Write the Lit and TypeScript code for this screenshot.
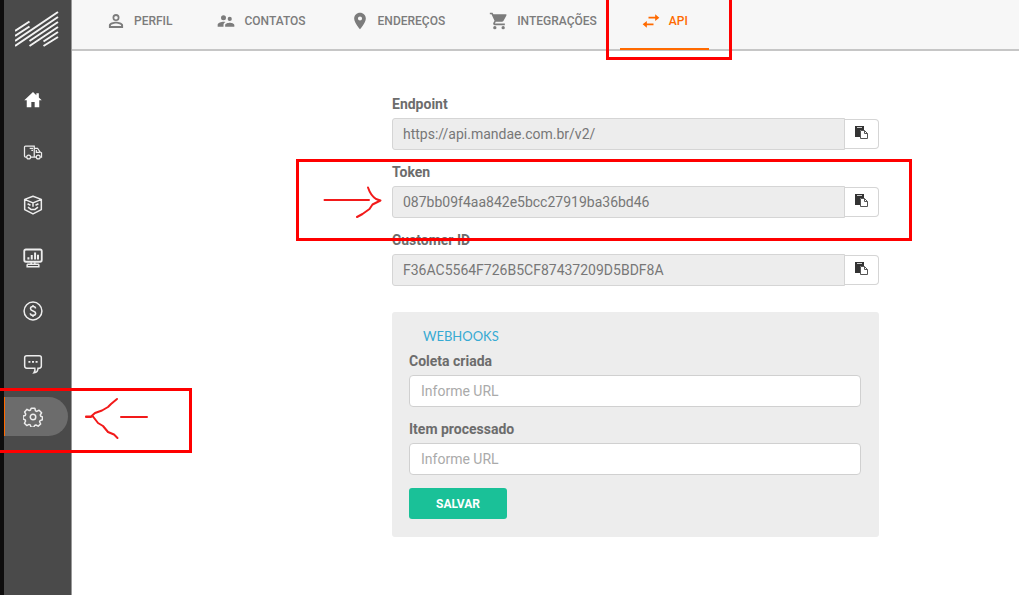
import { LitElement, html, css, svg } from "lit";
import { customElement, property } from "lit/decorators.js";

const tabIcons = {
  profile: svg`<path fill="currentColor" d="M12 5.900a2.100 2.100 0 1 1 0 4.200 2.100 2.100 0 0 1 0-4.200m0 9c2.970 0 6.100 1.460 6.100 2.100v1.100H5.900V17c0-.640 3.130-2.100 6.100-2.100M12 3.500a4.200 4.200 0 1 0 0 8.400 4.200 4.200 0 0 0 0-8.400m0 9.500c-2.670 0-8.500 1.340-8.500 4v3.500h17V17c0-2.660-5.830-4-8.500-4"/>`,
  contacts: svg`<path fill="currentColor" d="M16.500 12a2.500 2.500 0 1 0 0-5 2.500 2.500 0 0 0 0 5M9 11a3 3 0 1 0 0-6 3 3 0 0 0 0 6m7.500 3c-1.830 0-5.500.920-5.500 2.750V19h11v-2.250c0-1.830-3.670-2.750-5.500-2.750M9 13c-2.330 0-7 1.170-7 3.500V19h7v-2.250c0-.850.330-2.340 2.370-3.470C10.500 13.100 9.660 13 9 13"/>`,
  pin: svg`<path fill="currentColor" d="M12 2C8.130 2 5 5.130 5 9c0 5.250 7 13 7 13s7-7.750 7-13c0-3.870-3.130-7-7-7m0 9.500a2.500 2.500 0 1 1 0-5 2.500 2.500 0 0 1 0 5"/>`,
  cart: svg`<path fill="currentColor" d="M7 18a2 2 0 1 0 0 4 2 2 0 0 0 0-4M1 2v2h2l3.600 7.590-1.350 2.450C4.520 15.370 5.480 17 7 17h12v-2H7.420a.25.25 0 0 1-.25-.25l.030-.120.900-1.630h7.450c.750 0 1.410-.410 1.750-1.030l3.580-6.490A1 1 0 0 0 20 4H5.210l-.940-2zm16 16a2 2 0 1 0 0 4 2 2 0 0 0 0-4"/>`,
  swap: svg`<path fill="currentColor" d="M22 8l-5-4v3H9v2h8v3zM2 16l5-4v3h8v2H7v3z"/>`,
};

const navIcons = {
  home: svg`<path fill="#fff" d="M12 3.500 1.500 13.500h3V22h5.500v-6.500h4V22h5.500v-8.500h3L19 10.200V5h-3v2.400z"/>`,
  truck: svg`<g stroke-width="1.500"><path d="M4.500 18H3a1.200 1.200 0 0 1-1.200-1.200V6A1.200 1.200 0 0 1 3 4.800h10.500V18H9.200M13.500 7.500h4l3 4.500 1.700 1V18h-1.500M16 18h-2.500M16 9.500v2.800h4M8 7.500h4M10 10h2"/><circle cx="6.800" cy="18" r="2.300"/><circle cx="18.300" cy="18" r="2.300"/></g>`,
  box: svg`<path stroke-linejoin="round" d="M12 1.500 22 5.200v12.300L12 22.700 2 17.500V5.200zM2.500 5.500 12 9.500l9.500-4M12 9.500v4.500M5.500 10.500l3.500 1.800M18.500 10.500 15 12.300M6 14.500l3.500 2.800h5l3.500-2.800"/>`,
  monitor: svg`<g><rect stroke-width="2.200" x="1.500" y="1.800" width="21" height="14.700" rx="2"/><path stroke-width="2.400" d="M6.500 13.800V11M10.500 13.800V8.500M14.500 13.800V5.500M18 13.800V8"/><path d="M9.800 17v2.500M14.200 17v2.500M5 19.500h14M5 19.500v3h14v-3"/></g>`,
  dollar: svg`<g><circle cx="12" cy="12" r="10.700"/><path d="M15 9c0-1.500-1.300-2.300-3-2.300S9 7.500 9 9.200c0 3.500 6.200 2 6.200 5.400 0 1.700-1.500 2.500-3.200 2.500s-3.200-.8-3.200-2.500M12 4.800v2M12 17v2.200"/></g>`,
  chat: svg`<g><path d="M4.500 2h15A2.500 2.500 0 0 1 22 4.500v10a2.500 2.500 0 0 1-2.500 2.500H18c0 2.800-1.500 5-4.800 5.500 1.300-1.700 1.500-3.500 1-5.500H4.500A2.500 2.500 0 0 1 2 14.500v-10A2.500 2.500 0 0 1 4.500 2z"/><path stroke-width="2.200" d="M6.500 9.500h2.400M10.800 9.500h2.400M15.100 9.500h2.400"/></g>`,
  gear: svg`<g><circle cx="12" cy="12" r="3.300"/><path stroke-linejoin="round" d="M9.800 1.500h4.400l.8 3.100 1.500.7 2.800-1.500 3 3.200-1.600 2.600.6 1.500 2 .7v3.500l-2.800 1-.6 1.400 1.300 2.700-3 2.600-2.700-1.400-1.600.6-.9 2h-3.300l-1-2.700-1.500-.6-2.700 1.400-2.800-2.800 1.400-2.700-.6-1.500-2.400-.8v-3.700l2.600-.7.6-1.600-1.400-2.600 2.900-3.100 2.700 1.500 1.500-.7z"/></g>`,
};

@customElement("copy-field")
class CopyField extends LitElement {
  @property() label = "";
  @property() value = "";
  static styles = css`
    :host { display: flex; flex-direction: column; gap: 5px; }
    label { font-weight: 700; line-height: 18px; color: #6c6c6c; }
    .row { display: flex; align-items: center; }
    input {
      flex: 1; min-width: 0; height: 32px; box-sizing: border-box; padding: 0 10px;
      border: 1px solid #d5d5d5; border-radius: 3px 0 0 3px; background: #ededed;
      color: #777; font: inherit; outline: none;
    }
    button {
      width: 34px; height: 30px; box-sizing: border-box; padding: 0 0 4px;
      display: flex; align-items: center; justify-content: center;
      border: 1px solid #d5d5d5; border-left: 0; border-radius: 0 4px 4px 0; background: #fff;
    }
    svg { width: 13px; height: 13px; display: block; }
  `;
  render() {
    return html`
      <label for="value">${this.label}</label>
      <div class="row">
        <input id="value" readonly .value=${this.value} />
        <button type="button" aria-label="Copiar">
          <svg viewBox="0 0 13 13">
            <path fill="#333" d="M0 0h9v4H5v7H0z" />
            <path fill="#ccc" d="M2 1h5v1H2z" />
            <path fill="#fff" stroke="#555" d="M5.500 4.500h4l3 3v5h-7zM9.500 4.500v3h3" />
          </svg>
        </button>
      </div>`;
  }
}

@customElement("app-root")
class AppRoot extends LitElement {
  static styles = css`
    :host {
      display: flex; position: relative; min-height: 100vh; overflow: hidden;
      font: 14px/20px Roboto, sans-serif; color: #777; background: #fff;
    }
    .side {
      flex: none; width: 67px; border-left: 4px solid #0e0d0d; border-right: 1px solid #999;
      background: #4a4a4a;
    }
    .logo { display: block; width: 44px; height: 38px; margin: 10px 0 31px 11px; }
    .nav { display: flex; flex-direction: column; gap: 14px; margin: 0; padding: 0; }
    .nav a {
      display: flex; align-items: center; height: 39px; margin-right: 3px; padding-left: 19px;
      box-sizing: border-box; color: #ededed;
    }
    .nav a.active {
      background: #6c6c6c; border-left: 1px solid #ff6a00; padding-left: 18px;
      border-radius: 0 20px 20px 0;
    }
    .nav svg { width: 20px; height: 20px; fill: none; stroke: currentColor; stroke-width: 1.8; }
    .nav .solid svg { stroke: none; }
    main { flex: 1; min-width: 0; }
    .tabs {
      display: flex; gap: 2px; height: 49px; padding-left: 13px; background: #f7f7f7;
      border-bottom: 2px solid #c6c6c6;
    }
    .tabs a {
      display: flex; align-items: center; gap: 8px; padding: 0 21px 8px; height: 50px;
      box-sizing: border-box; color: #7c7c7c; font-size: 12px; font-weight: 500;
      text-decoration: none; white-space: nowrap;
    }
    .tabs a.active { color: #ff6a00; border-bottom: 2px solid #ff6a00; padding-bottom: 6px; }
    .tabs svg { width: 20px; height: 20px; flex: none; }
    .content { display: grid; grid-template-columns: 320fr 487fr 140fr; padding: 44px 0 57px; }
    form { grid-column: 2; display: flex; flex-direction: column; gap: 13px; }
    .panel {
      display: flex; flex-direction: column; gap: 5px; margin-top: 13px; padding: 14px 18px 18px 17px;
      background: #ededed; border-radius: 3px;
    }
    h2 {
      margin: 0 0 0 14px; font: 400 13px/21px Lato, sans-serif; color: #37aad3;
    }
    .panel label { font-weight: 700; line-height: 18px; color: #6c6c6c; }
    .panel input {
      height: 32px; box-sizing: border-box; padding: 0 11px; margin-bottom: 8px;
      border: 1px solid #d0d0d0; border-radius: 4px; background: #fff; font: inherit; color: #777;
    }
    .panel input::placeholder { color: #aaa; opacity: 1; }
    .save {
      align-self: flex-start; width: 98px; height: 31px; border: 0; border-radius: 3px;
      background: #1ac198; color: #fff; font: 700 12px/20px Roboto, sans-serif;
    }
    .marks {
      position: absolute; left: 0; top: 0; width: 1019px; height: 595px; pointer-events: none;
      fill: none; stroke: #f00; stroke-width: 3;
    }
    .ink { stroke: #f21a1a; stroke-width: 2; stroke-linecap: round; stroke-linejoin: round; }
  `;

  tab(icon: unknown, text: string, active = false) {
    return html`<a href="#" class=${active ? "active" : ""}><svg viewBox="0 0 24 24">${icon}</svg>${text}</a>`;
  }

  item(icon: unknown, text: string, cls = "") {
    return html`<a href="#" aria-label=${text} class=${cls}><svg viewBox="0 0 24 24">${icon}</svg></a>`;
  }

  render() {
    return html`
      <aside class="side">
        <svg class="logo" viewBox="0 0 44 38" fill="none" stroke="#f2f2f2" stroke-width="2">
          <path d="M0 21 14.500 11.500M0 26 14.500 16.500M0 31 43 2M0 36 43 7M14.500 31 43 12M14.500 36 43 17M28.500 31.500 43 22M28.500 36 43 27" />
        </svg>
        <nav class="nav">
          ${this.item(navIcons.home, "Início", "solid")}
          ${this.item(navIcons.truck, "Coletas")}
          ${this.item(navIcons.box, "Encomendas")}
          ${this.item(navIcons.monitor, "Relatórios")}
          ${this.item(navIcons.dollar, "Financeiro")}
          ${this.item(navIcons.chat, "Mensagens")}
          ${this.item(navIcons.gear, "Configurações", "active")}
        </nav>
      </aside>
      <main>
        <nav class="tabs">
          ${this.tab(tabIcons.profile, "PERFIL")}
          ${this.tab(tabIcons.contacts, "CONTATOS")}
          ${this.tab(tabIcons.pin, "ENDEREÇOS")}
          ${this.tab(tabIcons.cart, "INTEGRAÇÕES")}
          ${this.tab(tabIcons.swap, "API", true)}
        </nav>
        <div class="content">
          <form>
            <copy-field label="Endpoint" value="https://api.mandae.com.br/v2/"></copy-field>
            <copy-field label="Token" value="087bb09f4aa842e5bcc27919ba36bd46"></copy-field>
            <copy-field label="Customer ID" value="F36AC5564F726B5CF87437209D5BDF8A"></copy-field>
            <section class="panel">
              <h2>WEBHOOKS</h2>
              <label for="created">Coleta criada</label>
              <input id="created" type="url" placeholder="Informe URL" />
              <label for="processed">Item processado</label>
              <input id="processed" type="url" placeholder="Informe URL" />
              <button class="save" type="button">SALVAR</button>
            </section>
          </form>
        </div>
      </main>
      <svg class="marks" viewBox="0 0 1019 595" aria-hidden="true">
        <path d="M607.500-2V58.500H730.500V-2M297.500 160.500h613v79h-613zM-2 389.500H190.500v62H-2" />
        <path class="ink" d="M324.500 200H369M368 187.500c2 6 5 9.500 8 11.500l4.500 1.500-8 4-3 4.500-7 5-5.500 3" />
        <path class="ink" d="M117 399l-6 5-3 3-6 3.500-7 2.500-4 3.500h-5h7l5 6.500 5 3 5 6 6 2.500 3.500 3.500M121 417h26M86 417h5" />
      </svg>`;
  }
}
